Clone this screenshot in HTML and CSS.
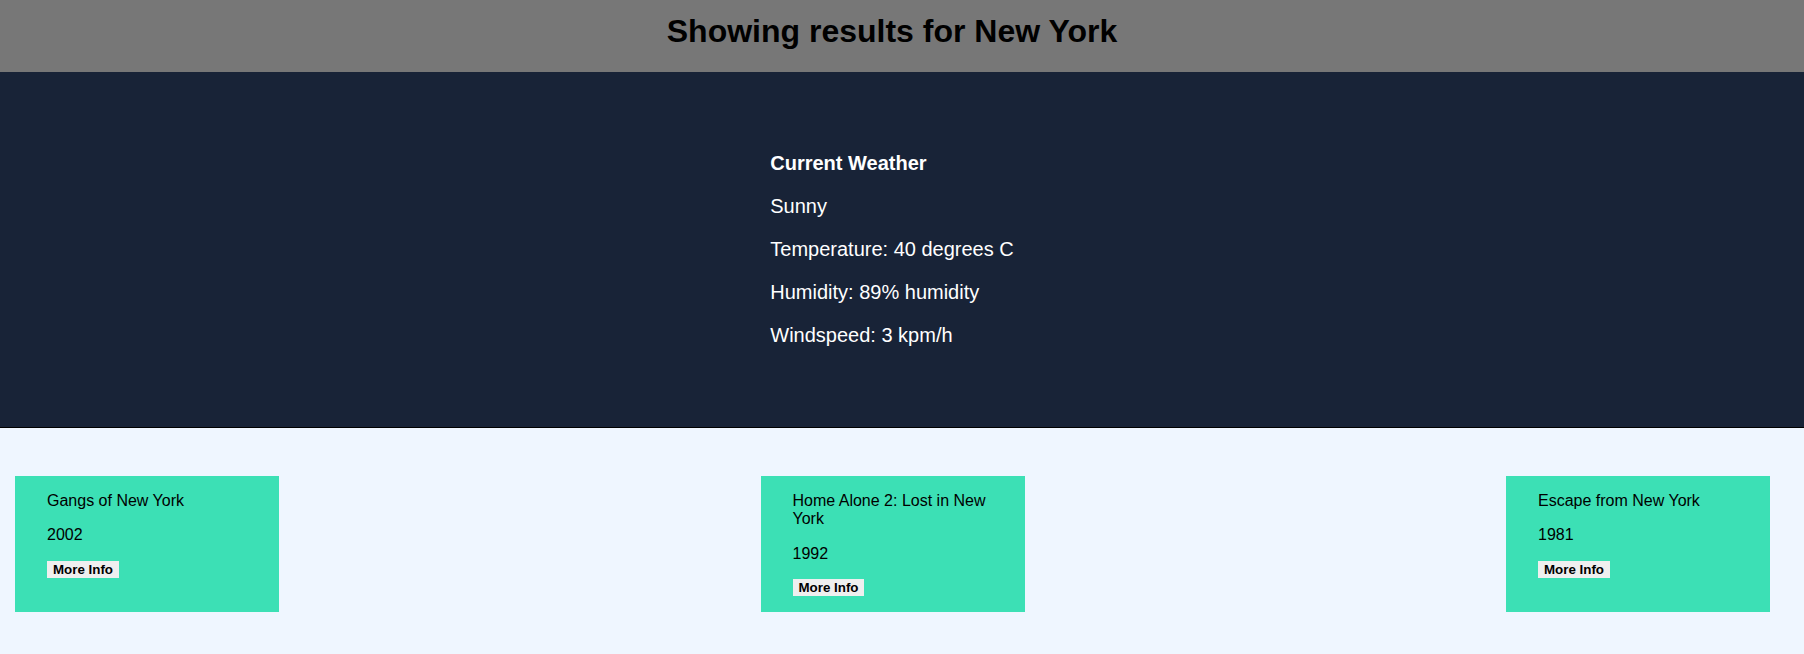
FILE: index.html
```html
<!DOCTYPE html>
<html>
<head>
<meta charset="utf-8">
<title>Results</title>
<link rel="stylesheet" href="styles.css">
</head>
<body>
<header class="header">
  <h1 class="header-title">Showing results for New York</h1>
</header>
<section class="weather">
  <div class="weather-box">
    <p class="weather-title">Current Weather</p>
    <p class="weather-line">Sunny</p>
    <p class="weather-line">Temperature: 40 degrees C</p>
    <p class="weather-line">Humidity: 89% humidity</p>
    <p class="weather-line">Windspeed: 3 kpm/h</p>
  </div>
</section>
<section class="movies">
  <div class="card">
    <p class="card-title">Gangs of New York</p>
    <p class="card-year">2002</p>
    <button class="card-btn">More Info</button>
  </div>
  <div class="card">
    <p class="card-title">Home Alone 2: Lost in New York</p>
    <p class="card-year">1992</p>
    <button class="card-btn">More Info</button>
  </div>
  <div class="card">
    <p class="card-title">Escape from New York</p>
    <p class="card-year">1981</p>
    <button class="card-btn">More Info</button>
  </div>
</section>
</body>
</html>
```
FILE: styles.css
```css
* { box-sizing: border-box; }
html, body {
  margin: 0;
  padding: 0;
  font-family: "Liberation Sans", Arial, Helvetica, sans-serif;
  background: #eff6ff;
}
.header {
  background: #777777;
  height: 72px;
  padding: 13px 20px 22px 0;
  text-align: center;
}
.header-title {
  margin: 0;
  font-size: 32px;
  line-height: 37px;
  font-weight: bold;
  color: #000;
}
.weather {
  background: #182337;
  padding: 60px 20px 60px 0;
  border-bottom: 1px solid #000;
  display: flex;
  justify-content: center;
}
.weather-box {
  width: max-content;
  color: #fff;
}
.weather-box p {
  margin: 20px 0;
  font-size: 20px;
  line-height: 23px;
}
.weather-title { font-weight: bold; }
.movies {
  display: flex;
  justify-content: space-between;
  align-items: stretch;
  padding: 48px 34px 48px 15px;
}
.card {
  width: 264px;
  background: #3ce0b5;
  padding: 0 32px;
  color: #000;
}
.card p {
  margin: 16px 0;
  font-size: 16px;
  line-height: 18.4px;
}
.card-btn {
  display: block;
  width: max-content;
  margin: 16px 0;
  border: none;
  background: #efefef;
  color: #000;
  font-family: "Liberation Sans", Arial, sans-serif;
  font-size: 13.333px;
  font-weight: bold;
  line-height: 15px;
  padding: 1px 6px;
}
```
